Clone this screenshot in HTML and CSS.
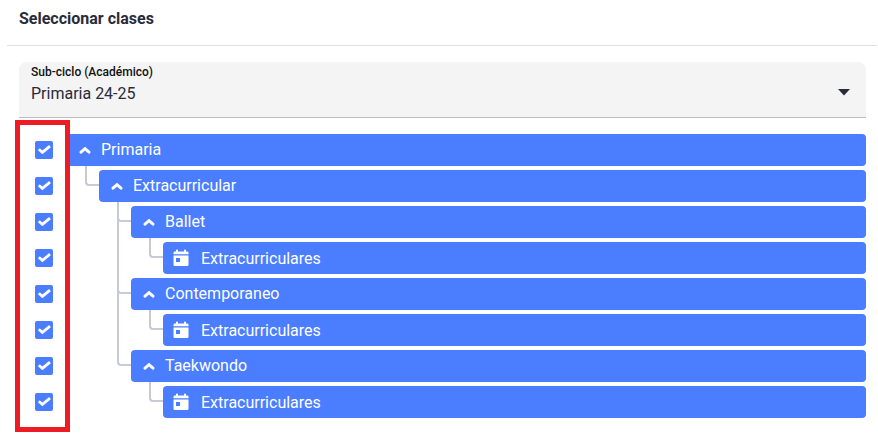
FILE: index.html
```html
<!DOCTYPE html>
<html lang="es">
<head>
    <meta charset="UTF-8">
    <meta name="viewport" content="width=device-width, initial-scale=1.0">
    <title>Seleccionar clases</title>
    <link rel="stylesheet" href="styles.css">
</head>
<body>
    <svg class="defs" width="0" height="0">
        <symbol id="check" viewBox="0 0 18 18">
            <path d="M3.8 8.3 L7.4 11.4 L15 5.2" fill="none" stroke="#fff" stroke-width="2.8"/>
        </symbol>
        <symbol id="chevron" viewBox="0 0 12 8">
            <path d="M2 6.2 L6 2.6 L10 6.2" fill="none" stroke="#fff" stroke-width="2.9" stroke-linecap="round"/>
        </symbol>
        <symbol id="calendar" viewBox="0 0 16 18">
            <path d="M3 1.5 Q3 .5 4 .5 T5 1.5 V2.5 H11 V1.5 Q11 .5 12 .5 T13 1.5 V2.5 H14.2 Q15.5 2.5 15.5 3.8 V5.3 H.5 V3.8 Q.5 2.5 1.8 2.5 H3 Z M.5 6.4 H15.5 V15.7 Q15.5 17 14.2 17 H1.8 Q.5 17 .5 15.7 Z M3 9 V13 H7 V9 Z" fill="#fff" fill-rule="evenodd"/>
        </symbol>
    </svg>

    <h1 class="title">Seleccionar clases</h1>

    <div class="content">
        <div class="select">
            <div class="select-text">
                <label class="select-label">Sub-ciclo (Académico)</label>
                <div class="select-value">Primaria 24-25</div>
            </div>
            <svg class="arrow" width="12" height="7" viewBox="0 0 12 7"><path d="M0 0 H12 L6 6.5 Z"/></svg>
        </div>

        <div class="classes">
            <div class="checks">
                <svg class="check"><use href="#check"/></svg>
                <svg class="check"><use href="#check"/></svg>
                <svg class="check"><use href="#check"/></svg>
                <svg class="check"><use href="#check"/></svg>
                <svg class="check"><use href="#check"/></svg>
                <svg class="check"><use href="#check"/></svg>
                <svg class="check"><use href="#check"/></svg>
                <svg class="check"><use href="#check"/></svg>
            </div>
            <ul class="tree">
                <li>
                    <div class="node"><svg class="chevron"><use href="#chevron"/></svg><span>Primaria</span></div>
                    <ul>
                        <li>
                            <div class="node"><svg class="chevron"><use href="#chevron"/></svg><span>Extracurricular</span></div>
                            <ul>
                                <li>
                                    <div class="node"><svg class="chevron"><use href="#chevron"/></svg><span>Ballet</span></div>
                                    <ul>
                                        <li><div class="node leaf"><svg class="calendar"><use href="#calendar"/></svg><span>Extracurriculares</span></div></li>
                                    </ul>
                                </li>
                                <li>
                                    <div class="node"><svg class="chevron"><use href="#chevron"/></svg><span>Contemporaneo</span></div>
                                    <ul>
                                        <li><div class="node leaf"><svg class="calendar"><use href="#calendar"/></svg><span>Extracurriculares</span></div></li>
                                    </ul>
                                </li>
                                <li>
                                    <div class="node"><svg class="chevron"><use href="#chevron"/></svg><span>Taekwondo</span></div>
                                    <ul>
                                        <li><div class="node leaf"><svg class="calendar"><use href="#calendar"/></svg><span>Extracurriculares</span></div></li>
                                    </ul>
                                </li>
                            </ul>
                        </li>
                    </ul>
                </li>
            </ul>
            <div class="highlight"></div>
        </div>
    </div>
</body>
</html>
```

FILE: styles.css
```css
*, *::before, *::after {
    box-sizing: border-box;
}
body {
    margin: 0;
    height: 439px;
    overflow: hidden;
    background-color: #fff;
    color: #292b3a;
    font-family: Roboto, sans-serif;
    font-size: 16px;
}
.defs {
    position: absolute;
}
.title {
    height: 46px;
    margin: 0 1px 0 7px;
    padding: 9px 12px 0;
    border-bottom: 1px solid #dedede;
    font-size: 16px;
    font-weight: 700;
    line-height: 20px;
}
.content {
    padding: 16px 12px 0 19px;
}
.select {
    display: flex;
    justify-content: space-between;
    height: 56px;
    padding: 2px 16px 0 12px;
    background-color: #f4f4f4;
    border-bottom: 1px solid #bdbdbd;
    border-radius: 8px 8px 0 0;
}
.select-label {
    display: block;
    color: #111;
    font-size: 12px;
    font-weight: 500;
    line-height: 16px;
}
.select-value {
    margin-top: 4px;
    line-height: 20px;
}
.arrow {
    margin-top: 25px;
    fill: #292b3a;
}
.classes {
    position: relative;
    display: flex;
    padding-top: 16px;
}
.checks {
    display: flex;
    flex-direction: column;
    gap: 18px;
    width: 48px;
    padding: 7px 0 0 16px;
}
.check {
    width: 18px;
    height: 18px;
    background-color: #4a7dff;
    border-radius: 2px;
}
.tree {
    flex: 1;
}
ul {
    margin: 0;
    padding: 0;
    list-style: none;
}
li {
    position: relative;
}
li ul {
    padding-left: 32px;
}
.node {
    display: flex;
    align-items: center;
    height: 32px;
    margin-bottom: 4px;
    padding-left: 12px;
    background-color: #4a7dff;
    border-radius: 4px;
    color: #fff;
}
.node span {
    line-height: 20px;
}
.node.leaf {
    padding-left: 10px;
}
.node.leaf span {
    margin-top: 2px;
}
.chevron {
    width: 12px;
    height: 8px;
    margin-right: 10px;
}
.calendar {
    width: 16px;
    height: 18px;
    margin-right: 12px;
}
/* tree connectors */
li li::before {
    content: "";
    position: absolute;
    top: -4px;
    left: -14px;
    width: 14px;
    height: 20px;
    border: solid #c8cad6;
    border-width: 0 0 2px 2px;
    border-bottom-left-radius: 4px;
}
li li:not(:last-child)::after {
    content: "";
    position: absolute;
    top: -4px;
    bottom: 0;
    left: -14px;
    width: 2px;
    background-color: #c8cad6;
}
.highlight {
    position: absolute;
    top: 2px;
    left: -4px;
    width: 55px;
    height: 312px;
    border: 5px solid #ed1c24;
}
```
